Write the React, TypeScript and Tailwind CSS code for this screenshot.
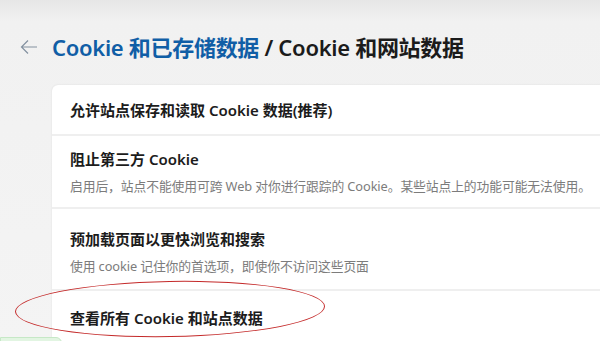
import * as React from "react"

const font = { fontFamily: '"Noto Sans", "Noto Sans CJK SC", sans-serif' }

interface Row {
  title: string
  desc?: string
  className: string
}

const rows: Row[] = [
  { title: "允许站点保存和读取 Cookie 数据(推荐)", className: "h-[51px] justify-center" },
  {
    title: "阻止第三方 Cookie",
    desc: "启用后，站点不能使用可跨 Web 对你进行跟踪的 Cookie。某些站点上的功能可能无法使用。",
    className: "h-[73px] pt-[12px]",
  },
  {
    title: "预加载页面以更快浏览和搜索",
    desc: "使用 cookie 记住你的首选项，即使你不访问这些页面",
    className: "h-[82px] pt-[19px]",
  },
  { title: "查看所有 Cookie 和站点数据", className: "h-[56px] pt-[16px]" },
]

export default function App() {
  return (
    <div
      className="relative w-[600px] h-[341px] overflow-hidden bg-[linear-gradient(to_bottom,#e6e6e6_0px,#f1f1f1_22px,#f4f4f4_100%)]"
      style={font}
    >
      <div className="flex items-center gap-[14px] pl-[20px] pt-[31px] h-[63px]">
        <svg width="18" height="16" viewBox="0 0 18 16" fill="none" stroke="#8391a0" strokeWidth="1.2">
          <path d="M17 8H2M8 1.5L1.5 8L8 14.5" />
        </svg>
        <h1 className="text-[22px] leading-[32px] font-semibold tracking-[-0.3px] text-[#1b1b1b] whitespace-nowrap">
          <span className="text-[#105ea6]">Cookie 和已存储数据</span> / Cookie 和网站数据
        </h1>
      </div>

      <div className="ml-[52px] mt-[22px] w-[570px] bg-white rounded-tl-[6px] shadow-[0_0_2px_rgba(0,0,0,0.1)]">
        {rows.map((row, i) => (
          <div
            key={row.title}
            className={`flex flex-col px-[18px] ${row.className} ${
              i < rows.length - 1 ? "border-b-2 border-[#efefef]" : ""
            }`}
          >
            <div className="text-[15px] leading-[22px] font-semibold text-[#1c1c1c] whitespace-nowrap">
              {row.title}
            </div>
            {row.desc && (
              <div className="mt-[6px] text-[12.8px] leading-[20px] tracking-[-0.1px] text-[#7c7c7c] whitespace-nowrap">
                {row.desc}
              </div>
            )}
          </div>
        ))}
      </div>

      {/* red annotation circle */}
      <div className="absolute left-[15px] top-[281px] w-[310px] h-[56px] rounded-[50%] border-[1.5px] border-[#c42a2a] -rotate-1" />

      <div className="absolute left-0 top-[337px] w-[62px] h-[10px] rounded-tr-[6px] bg-[#e2f5e2] border border-[#c6e8c6]" />
    </div>
  )
}
